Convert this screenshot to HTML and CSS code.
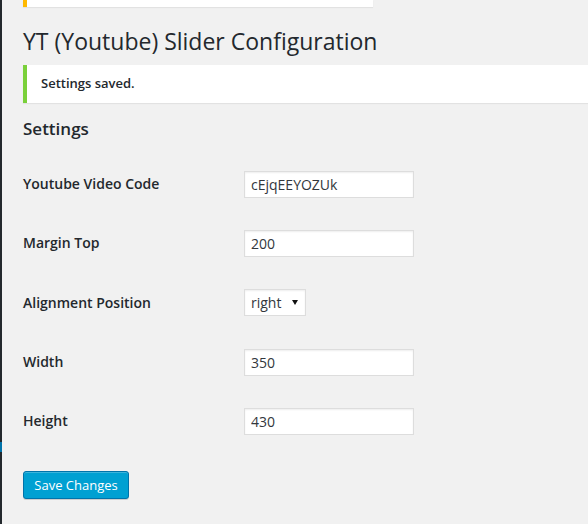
FILE: index.html
```html
<!DOCTYPE html>
<html lang="en">
<head>
<meta charset="utf-8">
<title>YT (Youtube) Slider Configuration</title>
<link rel="stylesheet" href="styles.css">
</head>
<body>
<div class="admin">
  <div class="sidebar">
    <div class="sidebar-spacer"></div>
    <div class="sidebar-current"></div>
  </div>
  <main class="content">
    <div class="update-nag"></div>
    <h1 class="page-title">YT (Youtube) Slider Configuration</h1>
    <div class="notice-success"><p>Settings saved.</p></div>
    <h2 class="section-title">Settings</h2>
    <form class="form-table">
      <label class="field-label" for="code">Youtube Video Code</label>
      <div class="field"><input class="text-input" id="code" type="text" value="cEjqEEYOZUk"></div>

      <label class="field-label" for="margin">Margin Top</label>
      <div class="field"><input class="text-input" id="margin" type="text" value="200"></div>

      <label class="field-label" for="align">Alignment Position</label>
      <div class="field">
        <span class="select-wrap">
          <select class="select" id="align">
            <option>left</option>
            <option selected>right</option>
          </select>
        </span>
      </div>

      <label class="field-label" for="width">Width</label>
      <div class="field"><input class="text-input" id="width" type="text" value="350"></div>

      <label class="field-label" for="height">Height</label>
      <div class="field"><input class="text-input" id="height" type="text" value="430"></div>

      <div class="submit-row"><button class="button-primary" type="button">Save Changes</button></div>
    </form>
  </main>
</div>
</body>
</html>
```
FILE: styles.css
```css
html, body {
  margin: 0;
  padding: 0;
  background: #f1f1f1;
}
body {
  font-family: "Open Sans", "Noto Sans", sans-serif;
  color: #23282d;
  font-size: 13px;
  height: 524px;
  overflow: hidden;
}
.admin {
  display: flex;
  min-height: 524px;
}
.sidebar {
  width: 2px;
  flex: 0 0 2px;
  background: #23282d;
  display: flex;
  flex-direction: column;
}
.sidebar-spacer {
  height: 442px;
}
.sidebar-current {
  height: 10px;
  background: #0073aa;
}
.content {
  flex: 1;
  padding-left: 21px;
  min-width: 0;
}
.update-nag {
  width: 346px;
  height: 7px;
  background: #fff;
  border-left: 4px solid #ffb900;
  box-shadow: 0 1px 1px rgba(0, 0, 0, 0.06);
}
.page-title {
  margin: 20px 0 0;
  font-size: 23px;
  font-weight: 400;
  line-height: 29px;
  color: #23282d;
}
.notice-success {
  margin-top: 9px;
  background: #fff;
  border-left: 4px solid #7ad03a;
  box-shadow: 0 1px 1px rgba(0, 0, 0, 0.06);
  padding: 9px 14px 9px;
}
.notice-success p {
  margin: 0;
  font-size: 13px;
  line-height: 19.5px;
  font-weight: 600;
  color: #23282d;
}
.section-title {
  margin: 14px 0 0;
  font-size: 17px;
  font-weight: 600;
  line-height: 23px;
  color: #23282d;
}
.form-table {
  margin-top: 15px;
  display: grid;
  grid-template-columns: 221px 170px;
  grid-auto-rows: 59.3px;
}
.field-label {
  display: flex;
  align-items: center;
  padding-bottom: 1px;
  font-size: 14px;
  font-weight: 600;
  line-height: 19px;
  color: #23282d;
}
.field {
  display: flex;
  align-items: center;
}
.text-input {
  box-sizing: border-box;
  width: 170px;
  height: 27px;
  margin: 0;
  padding: 0 6px;
  border: 1px solid #ddd;
  border-radius: 0;
  background: #fff;
  box-shadow: inset 0 1px 2px rgba(0, 0, 0, 0.07);
  font-family: "Open Sans", "Noto Sans", sans-serif;
  font-size: 14px;
  color: #32373c;
  outline: none;
}
.select-wrap {
  position: relative;
  display: inline-block;
}
.select-wrap::after {
  content: "";
  position: absolute;
  right: 8px;
  top: 11px;
  border-left: 3px solid transparent;
  border-right: 3px solid transparent;
  border-top: 5px solid #111;
  pointer-events: none;
}
.select {
  -webkit-appearance: none;
  appearance: none;
  box-sizing: border-box;
  width: 62px;
  height: 27px;
  margin: 0;
  padding: 0 6px;
  border: 1px solid #ddd;
  border-radius: 0;
  background: #fff;
  box-shadow: inset 0 1px 2px rgba(0, 0, 0, 0.07);
  font-family: "Open Sans", "Noto Sans", sans-serif;
  font-size: 14px;
  color: #32373c;
  outline: none;
}
.submit-row {
  grid-column: 1 / -1;
  padding-top: 20px;
}
.button-primary {
  box-sizing: border-box;
  width: 106px;
  height: 28px;
  padding: 0 10px 1px;
  border: 1px solid #0073aa;
  border-radius: 3px;
  background: #00a0d2;
  color: #fff;
  font-family: "Open Sans", "Noto Sans", sans-serif;
  font-size: 13px;
  line-height: 26px;
  box-shadow: inset 0 1px 0 rgba(120, 200, 230, 0.5), 0 1px 0 rgba(0, 0, 0, 0.15);
  cursor: pointer;
}
```
